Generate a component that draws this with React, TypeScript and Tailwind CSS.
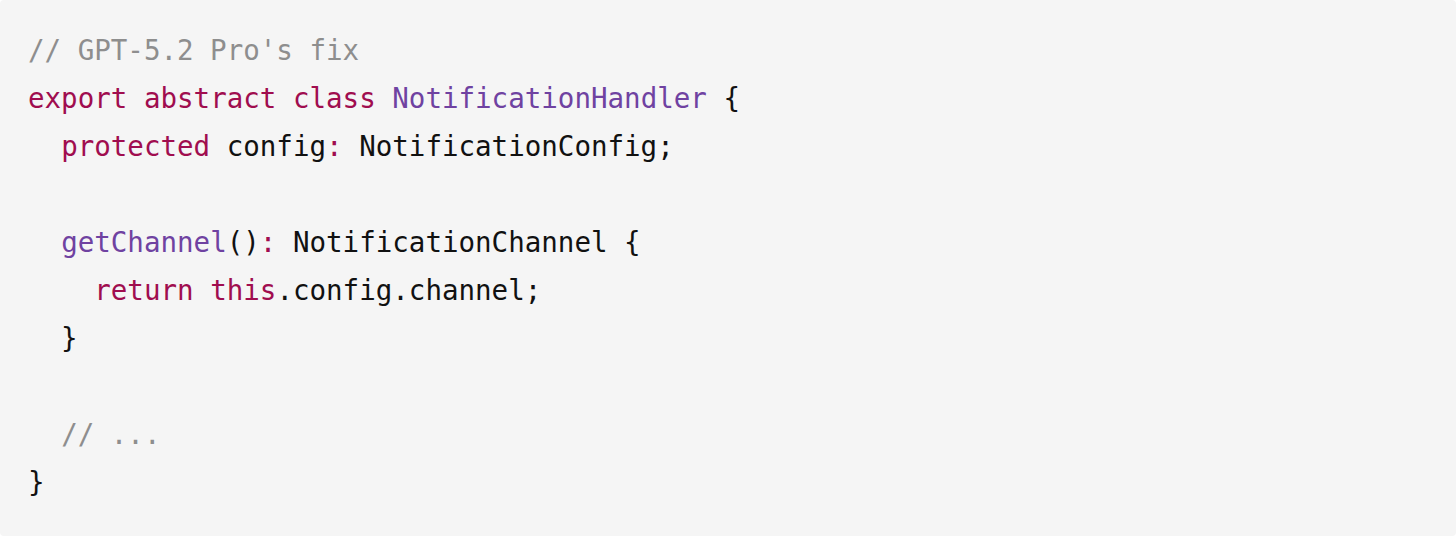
const K = "text-[#a00d4f]";
const F = "text-[#6f42a1]";
const C = "text-[#8e8e8e]";

export default function App() {
	return (
		<div className="w-[1456px] h-[536px] bg-white">
			<div className="h-full bg-[#f5f5f5] rounded-[4px] pl-[28px] pt-[26px] pb-[30px] text-[27.5px] leading-[48px] text-[#111] font-['DejaVu_Sans_Mono',monospace] whitespace-pre">
				<span className={C}>// GPT-5.2 Pro's fix</span>
				{"\n"}
				<span className={K}>export</span> <span className={K}>abstract</span> <span className={K}>class</span>{" "}
				<span className={F}>NotificationHandler</span> {"{"}
				{"\n  "}
				<span className={K}>protected</span> config<span className={K}>:</span> NotificationConfig;
				{"\n\n  "}
				<span className={F}>getChannel</span>()<span className={K}>:</span> NotificationChannel {"{"}
				{"\n    "}
				<span className={K}>return</span> <span className={K}>this</span>.config.channel;
				{"\n  }\n\n  "}
				<span className={C}>// ...</span>
				{"\n}"}
			</div>
		</div>
	);
}
